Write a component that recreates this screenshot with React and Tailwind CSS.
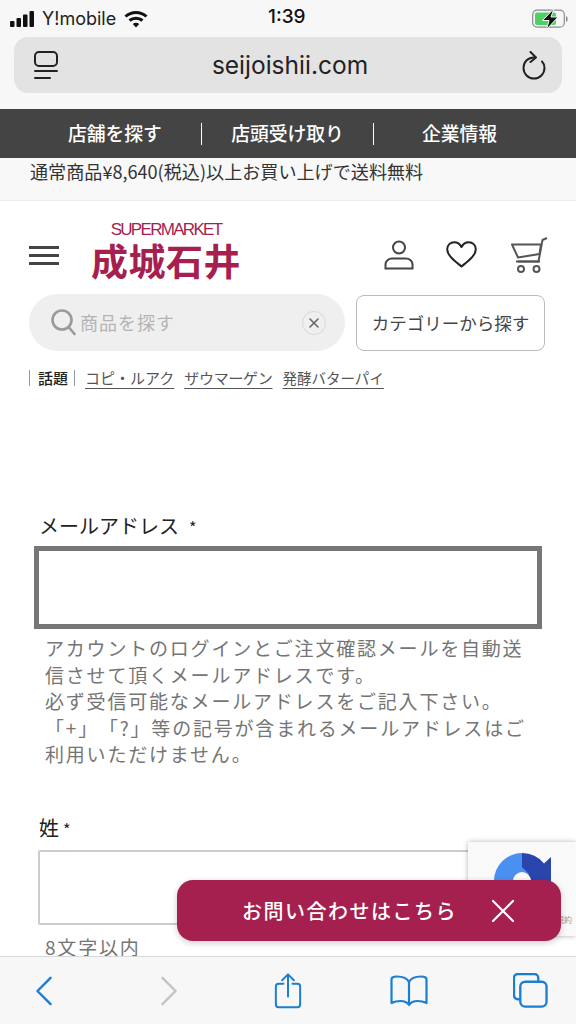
import React from "react";

const JP = { fontFamily: '"Noto Sans CJK JP", sans-serif' };

function Signal() {
  return (
    <svg width="26" height="16" viewBox="0 0 26 16" fill="#111">
      <rect x="0" y="10" width="4.5" height="6" rx="1" />
      <rect x="6.5" y="7" width="4.5" height="9" rx="1" />
      <rect x="13" y="3.5" width="4.5" height="12.5" rx="1" />
      <rect x="19.5" y="0" width="4.5" height="16" rx="1" />
    </svg>
  );
}

function Wifi() {
  return (
    <svg width="24" height="18" viewBox="0 0 24 18" fill="none" stroke="#111" strokeWidth="3">
      <path d="M1.5 6.5C7.5 1 16.5 1 22.5 6.5" />
      <path d="M5.5 10.5C9 7.5 15 7.5 18.5 10.5" />
      <path d="M12 17.5L8.8 14c2-1.6 4.4-1.6 6.4 0z" fill="#111" stroke="none" />
    </svg>
  );
}

function Battery() {
  return (
    <svg width="36" height="22" viewBox="0 0 36 22" fill="none">
      <rect x="0.7" y="2.200" width="31.6" height="17" rx="4.5" stroke="#8a8a8a" strokeWidth="1.2" />
      <rect x="3" y="4.500" width="21" height="12.5" rx="2" fill="#4cd264" />
      <path d="M34 8v6c1.2-.5 1.6-1.500 1.600-3S35.200 8.500 34 8z" fill="#8a8a8a" />
      <path d="M22 0.500L10.500 12.500h6.500L14.500 21.500 26 9h-7z" fill="#111" stroke="#f7f7f7" strokeWidth="1" />
    </svg>
  );
}

function ReaderIcon() {
  return (
    <svg width="24" height="28" viewBox="0 0 24 28" fill="none" stroke="#222" strokeWidth="2" strokeLinecap="round">
      <rect x="1" y="1" width="22" height="14" rx="4" />
      <path d="M1 20h22M1 27h15" />
    </svg>
  );
}

function ReloadIcon() {
  return (
    <svg width="24" height="29" viewBox="0 0 24 29" fill="none" stroke="#222" strokeWidth="2" strokeLinecap="round" strokeLinejoin="round">
      <path d="M13 6.500C6 6 1.500 11 1.500 17a10.500 10.500 0 0 0 21 0c0-3-1-5-2.500-6.500" />
      <path d="M8.500 1L14 6.500l-5.500 4.500" />
    </svg>
  );
}

function UserIcon() {
  return (
    <svg width="30" height="30" viewBox="0 0 30 30" fill="none" stroke="#444" strokeWidth="2">
      <circle cx="15" cy="7.500" r="6" />
      <path d="M1.500 28.500v-4c0-3.500 3-6 6.500-6h14c3.500 0 6.500 2.500 6.500 6v4z" />
    </svg>
  );
}

function HeartIcon() {
  return (
    <svg width="31" height="27" viewBox="0 0 31 27" fill="none" stroke="#222" strokeWidth="2" strokeLinejoin="round">
      <path d="M15.500 25.500C9 20 1.200 14.500 1.200 8.200 1.200 4 4.500 1.200 8.200 1.200c3 0 5.800 1.800 7.300 4.800 1.500-3 4.300-4.800 7.300-4.800 3.700 0 7 2.800 7 7 0 6.300-7.800 11.800-14.300 17.300z" />
    </svg>
  );
}

function CartIcon() {
  return (
    <svg width="37" height="36" viewBox="0 0 37 36" fill="none" stroke="#555" strokeWidth="2" strokeLinejoin="round">
      <path d="M36 1l-4.500 2-4 21.500H7" />
      <path d="M1 7.500h29L28.500 17 7 20.500z" />
      <path d="M5 24.500h24" />
      <circle cx="10" cy="32" r="3" />
      <circle cx="25.500" cy="32" r="3" />
    </svg>
  );
}

function SearchIcon() {
  return (
    <svg width="25" height="27" viewBox="0 0 25 27" fill="none" stroke="#9a9a9a" strokeWidth="2.600" strokeLinecap="round">
      <circle cx="11" cy="11" r="9.500" />
      <path d="M18 18.500l5.500 6.500" />
    </svg>
  );
}

function Topic({ children }) {
  return <span className="underline underline-offset-[4px] decoration-[#555]">{children}</span>;
}

function ToolbarIcons() {
  return (
    <div className="h-[68px] shrink-0 bg-[#f7f7f8] border-t border-[#d8d8d8] flex items-center pl-[34px] relative z-20">
      <svg width="20" height="30" viewBox="0 0 20 32" fill="none" stroke="#1c7ed0" strokeWidth="2.600" strokeLinecap="round" strokeLinejoin="round">
        <path d="M17 2L3 16l14 14" />
      </svg>
      <svg width="20" height="30" viewBox="0 0 20 32" fill="none" stroke="#c4c4c4" strokeWidth="2.600" strokeLinecap="round" strokeLinejoin="round" className="ml-[105px]">
        <path d="M3 2l14 14L3 30" />
      </svg>
      <svg width="30" height="36" viewBox="0 0 30 40" fill="none" stroke="#1c7ed0" strokeWidth="2.200" strokeLinecap="round" strokeLinejoin="round" className="ml-[94px]">
        <path d="M10 12H4.500A3 3 0 0 0 1.500 15v20a3 3 0 0 0 3 3h21a3 3 0 0 0 3-3V15a3 3 0 0 0-3-3H20" />
        <path d="M15 26V2M8.500 8L15 1.500 21.500 8" />
      </svg>
      <svg width="38" height="32" viewBox="0 0 38 32" fill="none" stroke="#1c7ed0" strokeWidth="2.200" strokeLinecap="round" strokeLinejoin="round" className="ml-[87px]">
        <path d="M19 7C17 3 12 1.500 7 1.500c-2 0-3.500.3-4.500 1-.7.500-1 1-1 2V28c3-1.500 6-2 9-2 3.500 0 6.500 1 8.500 4 2-3 5-4 8.500-4 3 0 6 .5 9 2V4.500c0-1-.3-1.500-1-2-1-.7-2.500-1-4.500-1-5 0-10 1.500-12 5.500zM19 7v23" />
      </svg>
      <svg width="35" height="35" viewBox="0 0 36 36" fill="none" stroke="#1c7ed0" strokeWidth="2.400" strokeLinecap="round" strokeLinejoin="round" className="ml-[85px]">
        <path d="M6 27H5a4 4 0 0 1-4-4V5a4 4 0 0 1 4-4h17a4 4 0 0 1 4 4v3" />
        <rect x="7.500" y="9" width="27" height="25.500" rx="5" />
      </svg>
    </div>
  );
}

export default function App() {
  return (
    <div className="relative w-[576px] h-[1024px] overflow-hidden bg-white flex flex-col text-[#222]" style={JP}>
      {/* iOS status bar */}
      <div className="h-[37px] shrink-0 bg-[#f7f7f7] relative flex items-center pl-[10px] pr-[8px]">
        <Signal />
        <span className="ml-[6px] text-[18px] leading-none text-[#222] font-['Inter',sans-serif]">Y!mobile</span>
        <span className="ml-[8px] flex"><Wifi /></span>
        <span className="absolute left-[268px] top-[5px] text-[19px] leading-[24px] font-medium text-[#111] font-['Inter',sans-serif]">1:39</span>
        <span className="ml-auto flex"><Battery /></span>
      </div>

      {/* URL bar */}
      <div className="h-[72px] shrink-0 bg-[#f7f7f7] px-[14px]">
        <div className="h-[56px] rounded-[14px] bg-[#e3e3e3] flex items-center justify-between pl-[20px] pr-[16px]">
          <ReaderIcon />
          <span className="text-[24.500px] leading-none text-[#222] font-['Inter',sans-serif]">seijoishii.com</span>
          <ReloadIcon />
        </div>
      </div>

      {/* Page */}
      <div className="flex-1 min-h-0 overflow-hidden">
        <div className="h-[49px] bg-[#444444] flex items-center text-white text-[18.800px] font-medium">
          <div className="w-[201px] pl-[68px] leading-none whitespace-nowrap">店舗を探す</div>
          <div className="w-px h-[22px] bg-white" />
          <div className="w-[171px] text-center leading-none whitespace-nowrap">店頭受け取り</div>
          <div className="w-px h-[22px] bg-white" />
          <div className="flex-1 pl-[48px] leading-none whitespace-nowrap">企業情報</div>
        </div>
        <div className="h-[43px] bg-[#f8f8f8] border-b border-[#ececec] pl-[30px] text-[18.100px] leading-[26px] text-[#333] whitespace-nowrap">
          通常商品¥8,640(税込)以上お買い上げで送料無料
        </div>

        <div className="h-[93px] flex items-start pl-[29px] pr-[29px]">
          <div className="mt-[45px] w-[30px] flex flex-col gap-[5px]">
            <div className="h-[3px] bg-[#444]" />
            <div className="h-[3px] bg-[#444]" />
            <div className="h-[3px] bg-[#444]" />
          </div>
          <div className="ml-[33px] mt-[20px] w-[148px] flex flex-col items-center text-[#a51f4f]">
            <span className="text-[17px] leading-[18px] tracking-[-1.700px] font-['Liberation_Sans',sans-serif] whitespace-nowrap">SUPERMARKET</span>
            <span className="mt-[5px] text-[37px] leading-[33px] font-bold tracking-[0.500px] whitespace-nowrap">成城石井</span>
          </div>
          <div className="ml-auto flex items-start">
            <span className="mt-[39px] mr-[32px] flex"><UserIcon /></span>
            <span className="mt-[40px] mr-[34px] flex"><HeartIcon /></span>
            <span className="mt-[36px] -mr-[1px] flex"><CartIcon /></span>
          </div>
        </div>

        <div className="flex pl-[29px] gap-[11px] items-start">
          <div className="w-[316px] h-[57px] rounded-full bg-[#efefef] flex items-center pl-[22px] pr-[19px]">
            <SearchIcon />
            <span className="ml-[4px] text-[18px] text-[#b4b4b4] tracking-[1px] whitespace-nowrap">商品を探す</span>
            <span className="ml-auto w-[24px] h-[24px] rounded-full border border-[#d8d8d8] flex items-center justify-center">
              <svg width="12" height="12" viewBox="0 0 12 12" stroke="#666" strokeWidth="1.600" strokeLinecap="round"><path d="M2 2l8 8M10 2l-8 8" /></svg>
            </span>
          </div>
          <div className="w-[189px] h-[56px] mt-[1px] rounded-[8px] border-[1.500px] border-[#bbbbbb] flex items-center justify-center text-[17.500px] text-[#444] whitespace-nowrap">
            カテゴリーから探す
          </div>
        </div>

        <div className="mt-[16px] pl-[29px] flex items-center text-[15px] leading-[22px] whitespace-nowrap text-[#555] h-[22px]">
          <div className="w-px h-[16px] bg-[#999]" />
          <span className="ml-[8px] text-[#222] font-medium">話題</span>
          <div className="ml-[6px] w-px h-[16px] bg-[#999]" />
          <span className="ml-[10px]"><Topic>コピ・ルアク</Topic></span>
          <span className="ml-[10px] tracking-[-0.300px]"><Topic>ザウマーゲン</Topic></span>
          <span className="ml-[10px] text-[14.500px]"><Topic>発酵バターパイ</Topic></span>
        </div>

        {/* Form */}
        <div className="mt-[122px] pl-[39px] text-[20px] leading-[30px] text-[#222]">
          メールアドレス<span className="ml-[10px] text-[16px]">*</span>
        </div>
        <div className="ml-[34px] mt-[4px] w-[508px] h-[83px] border-[5px] border-[#777777] bg-white" />
        <div className="ml-[45px] mt-[6px] w-[490px] text-[19px] leading-[26.500px] text-[#757575] tracking-[1.800px] [text-spacing-trim:space-all]">
          <div className="whitespace-nowrap">アカウントのログインとご注文確認メールを自動送</div>
          <div className="whitespace-nowrap">信させて頂くメールアドレスです。</div>
          <div className="whitespace-nowrap">必ず受信可能なメールアドレスをご記入下さい。</div>
          <div className="whitespace-nowrap">「+」「?」等の記号が含まれるメールアドレスはご</div>
          <div className="whitespace-nowrap">利用いただけません。</div>
        </div>
        <div className="mt-[45px] pl-[39px] text-[20px] leading-[30px] text-[#222]">
          姓<span className="ml-[4px] text-[16px]">*</span>
        </div>
        <div className="ml-[38px] mt-[6px] w-[500px] h-[75px] border-2 border-[#cccccc] rounded-[2px] bg-white" />
        <div className="ml-[45px] mt-[8px] text-[19px] leading-[28px] text-[#757575] tracking-[1.800px] whitespace-nowrap">8文字以内</div>
      </div>

      <ToolbarIcons />

      {/* reCAPTCHA badge */}
      <div className="absolute left-[468px] top-[842px] w-[108px] h-[94px] bg-[#f9f9f9] shadow-[0_0_5px_rgba(0,0,0,0.3)] z-10 overflow-hidden">
        <svg width="60" height="60" viewBox="0 0 60 60" className="ml-[24px] mt-[9px]">
          <path d="M30 2a28 28 0 0 1 22 10.500L59 6v24H30z" fill="#2a46ad" />
          <path d="M30 2v14l7 7-7 7H2A28 28 0 0 1 30 2z" fill="#4a90f0" />
          <path d="M2 30h14a14 14 0 0 0 14 14v16A28 28 0 0 1 2 30z" fill="#b0b0b0" />
          <circle cx="30" cy="30" r="9" fill="#f9f9f9" />
        </svg>
        <div className="mt-[4px] text-[8px] leading-[10px] text-[#999] text-right pr-[4px] whitespace-nowrap">プライバシー・利用規約</div>
      </div>

      {/* Contact pill */}
      <div className="absolute left-[177px] top-[880px] w-[384px] h-[61px] rounded-[16px] bg-[#a51f4f] z-10 shadow-[0_2px_6px_rgba(0,0,0,0.2)] flex items-center text-white">
        <span className="ml-[65px] text-[20px] leading-none font-medium tracking-[1.500px] whitespace-nowrap">お問い合わせはこちら</span>
        <svg width="24" height="24" viewBox="0 0 24 24" stroke="#fff" strokeWidth="2.200" strokeLinecap="round" className="absolute left-[314px] top-[19px]">
          <path d="M2 2l20 20M22 2L2 22" />
        </svg>
      </div>
    </div>
  );
}
